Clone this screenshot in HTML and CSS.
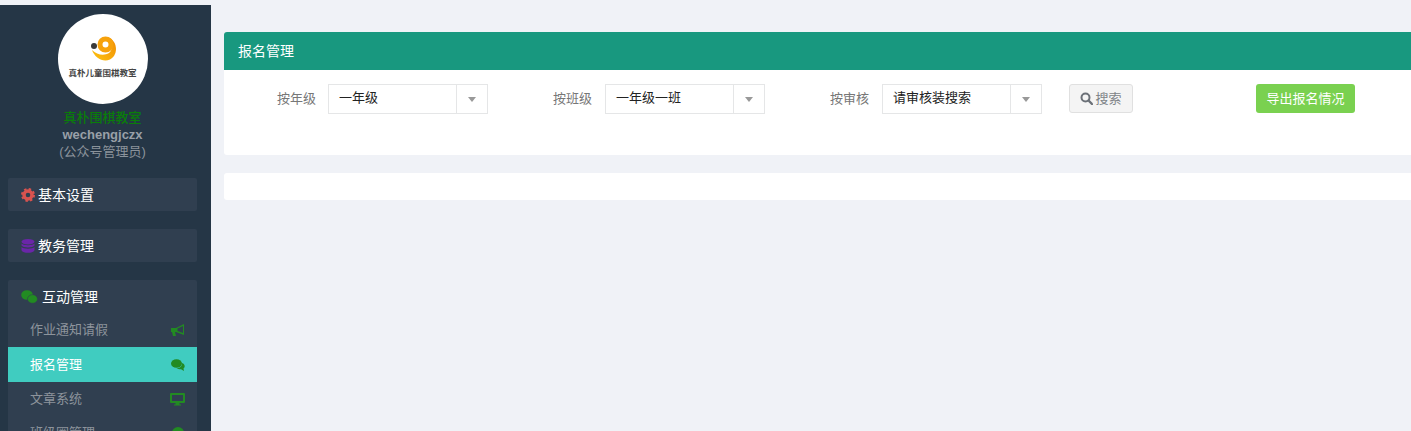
FILE: index.html
```html
<!DOCTYPE html>
<html lang="zh-CN">
<head>
    <meta charset="UTF-8">
    <title>报名管理</title>
    <link rel="stylesheet" href="styles.css">
</head>
<body>
<div class="page">
    <div class="sidebar">
        <div class="profile">
            <div class="avatar">
                <svg class="logo" viewBox="0 0 32 28" width="32" height="28">
                    <defs>
                        <linearGradient id="smile" x1="0" y1="1" x2="1" y2="0">
                            <stop offset="0" stop-color="#fdc30f"/>
                            <stop offset="1" stop-color="#f08a05"/>
                        </linearGradient>
                    </defs>
                    <circle cx="7" cy="11" r="3" fill="#3a3a3a"/>
                    <path d="M5 15 C8 24 20 30 27 21 C31 15 29 5 21 2 C26 8 26 15 22 18 C17 21 10 20 5 15 Z" fill="url(#smile)"/>
                    <circle cx="18.500" cy="9.500" r="5.500" fill="none" stroke="#f7a20c" stroke-width="5"/>
                </svg>
                <span class="logo-name">真朴儿童围棋教室</span>
            </div>
            <div class="school">真朴围棋教室</div>
            <div class="account">wechengjczx</div>
            <div class="role">(公众号管理员)</div>
        </div>

        <div class="menu-group">
            <div class="menu-title">
                <svg class="title-icon" viewBox="0 0 14 14" width="14" height="14">
                    <circle cx="7" cy="7" r="4" fill="none" stroke="#d9534f" stroke-width="3.400"/>
                    <circle cx="7" cy="7" r="6" fill="none" stroke="#d9534f" stroke-width="2" stroke-dasharray="2.400 2.312"/>
                </svg>
                基本设置
            </div>
        </div>

        <div class="menu-group">
            <div class="menu-title">
                <svg class="title-icon" viewBox="0 0 14 14" width="14" height="14">
                    <ellipse cx="7" cy="2.800" rx="6.500" ry="2.800" fill="#6a26a8"/>
                    <path d="M.5 4.500 C2 6.800 12 6.800 13.500 4.500 V6.500 C12 9 2 9 .5 6.500 Z" fill="#6a26a8"/>
                    <path d="M.5 8 C2 10.300 12 10.300 13.500 8 V11.200 C12 14.700 2 14.700 .5 11.200 Z" fill="#6a26a8"/>
                </svg>
                教务管理
            </div>
        </div>

        <div class="menu-group">
            <div class="menu-title menu-title-wide">
                <svg class="title-icon" viewBox="0 0 17 14" width="17" height="14">
                    <ellipse cx="6" cy="5" rx="5.800" ry="4.800" fill="#228b22"/>
                    <ellipse cx="11.500" cy="9" rx="5" ry="4.300" stroke="#303f50" stroke-width=".6" fill="#228b22"/>
                </svg>
                互动管理
            </div>
            <div class="menu-item">
                作业通知请假
                <svg viewBox="0 0 14 12" width="14" height="12">
                    <path d="M0 4 H5 L13 0 V11 L5 8 H4 L5 12 H2 L1 8 H0 Z" fill="#228b22"/>
                    <path d="M6.500 4.500 L12 2 V9 L6.500 7 Z" fill="#303f50"/>
                </svg>
            </div>
            <div class="menu-item menu-item-active">
                报名管理
                <svg viewBox="0 0 14 12" width="14" height="12">
                    <ellipse cx="5.500" cy="4.500" rx="5.500" ry="4.300" fill="#228b22"/>
                    <path d="M11 4 C14 5 14.500 8 12.500 9.500 L13 12 L10 10.300 C8 10.300 6.500 10 5.500 9.300 C9 9.300 11.500 7 11 4 Z" fill="#228b22"/>
                </svg>
            </div>
            <div class="menu-item">
                文章系统
                <svg viewBox="0 0 15 13" width="15" height="13">
                    <path d="M1 0 H14 A1 1 0 0 1 15 1 V9 A1 1 0 0 1 14 10 H9.500 V11.500 H11 V12.500 H4 V11.500 H5.500 V10 H1 A1 1 0 0 1 0 9 V1 A1 1 0 0 1 1 0 Z M2 2 V8 H13 V2 Z" fill="#228b22"/>
                </svg>
            </div>
            <div class="menu-item">
                班级圈管理
                <svg viewBox="0 0 14 14" width="14" height="14">
                    <circle cx="7" cy="7" r="6" fill="#228b22"/>
                </svg>
            </div>
        </div>
    </div>

    <div class="main">
        <div class="panel">
            <div class="panel-head">报名管理</div>
            <div class="filters">
                <label class="filter-label">按年级</label>
                <div class="select">
                    <span class="select-text">一年级</span>
                    <span class="select-arrow"></span>
                </div>
                <label class="filter-label">按班级</label>
                <div class="select">
                    <span class="select-text">一年级一班</span>
                    <span class="select-arrow"></span>
                </div>
                <label class="filter-label">按审核</label>
                <div class="select">
                    <span class="select-text">请审核装搜索</span>
                    <span class="select-arrow"></span>
                </div>
                <a class="btn btn-search">
                    <svg viewBox="0 0 13 13" width="13" height="13">
                        <circle cx="5.500" cy="5.500" r="4" fill="none" stroke="#6b7077" stroke-width="2"/>
                        <path d="M8.500 8.500 L12 12" stroke="#6b7077" stroke-width="2.400" stroke-linecap="round"/>
                    </svg>
                    搜索
                </a>
                <a class="btn btn-export">导出报名情况</a>
            </div>
        </div>
        <div class="panel panel-empty"></div>
    </div>
</div>
</body>
</html>
```

FILE: styles.css
```css
html, body { margin: 0; padding: 0; }
body {
    height: 431px;
    overflow: hidden;
    background: #f0f2f7;
    font: 13px/1.5 "Liberation Sans", "Noto Sans CJK SC", sans-serif;
}

.page {
    display: flex;
    height: 431px;
    overflow: hidden;
}

/* sidebar */
.sidebar {
    flex: none;
    width: 211px;
    margin-top: 5px;
    padding: 9px 14px 0 8px;
    box-sizing: border-box;
    background: #253646;
    overflow: hidden;
}
.profile {
    display: flex;
    flex-direction: column;
    align-items: center;
    margin-bottom: 18px;
}
.avatar {
    display: flex;
    flex-direction: column;
    align-items: center;
    width: 90px;
    height: 90px;
    border-radius: 50%;
    background: #fff;
    box-sizing: border-box;
    padding-top: 21px;
}
.logo-name {
    margin-top: 4px;
    font-size: 8.500px;
    line-height: 12px;
    font-weight: 700;
    color: #444;
    white-space: nowrap;
}
.school {
    margin-top: 5px;
    font-size: 13px;
    font-weight: 500;
    line-height: 17px;
    color: #0a7d0a;
}
.account {
    font-size: 13px;
    font-weight: 700;
    line-height: 17px;
    color: #99a0a8;
}
.role {
    font-size: 13px;
    line-height: 17px;
    color: #8b939b;
}

.menu-group {
    margin-bottom: 18px;
    background: #303f50;
    border-radius: 2px;
}
.menu-title {
    display: flex;
    align-items: center;
    gap: 3px;
    height: 33px;
    box-sizing: border-box;
    padding: 1px 0 0 13px;
    font-size: 14px;
    color: #fff;
}
.menu-title-wide { gap: 4px; }
.menu-item {
    display: flex;
    align-items: center;
    justify-content: space-between;
    height: 34px;
    padding: 0 12px 0 22px;
    font-size: 13px;
    color: #8d949c;
}
.menu-item-active {
    height: 35px;
    background: #40ccc0;
    color: #fff;
}

/* main */
.main {
    flex: 1;
    min-width: 0;
    overflow: hidden;
    padding: 32px 0 0 13px;
}
.panel {
    margin-right: -10px;
    margin-bottom: 18px;
    background: #fff;
    border-radius: 3px;
    height: 123px;
}
.panel-head {
    height: 38px;
    padding-left: 14px;
    background: #18987f;
    border-radius: 3px 3px 0 0;
    font-size: 14px;
    line-height: 38px;
    color: #fff;
}
.panel-empty { height: 27px; }

.filters {
    display: flex;
    align-items: flex-start;
    padding: 14px 0 0 52px;
}
.filter-label {
    width: 39px;
    margin-right: 13px;
    font-size: 13px;
    line-height: 30px;
    color: #777;
    white-space: nowrap;
}
.filter-label:first-child {
    margin-left: 1px;
    margin-right: 12px;
}
.select {
    display: flex;
    width: 160px;
    height: 30px;
    margin-right: 65px;
    box-sizing: border-box;
    border: 1px solid #e5e6e7;
}
.select:nth-of-type(3) { margin-right: 27px; }
.select-text {
    flex: 1;
    padding-left: 10px;
    font-size: 13px;
    line-height: 26px;
    color: #222;
}
.select-arrow {
    position: relative;
    flex: none;
    width: 30px;
    border-left: 1px solid #e5e6e7;
}
.select-arrow::after {
    content: "";
    position: absolute;
    left: 11px;
    top: 12px;
    border: 4px solid transparent;
    border-top: 5px solid #999;
    border-bottom: 0;
}

.btn {
    display: flex;
    align-items: center;
    justify-content: center;
    height: 29px;
    box-sizing: border-box;
    border-radius: 3px;
    font-size: 13px;
    white-space: nowrap;
}
.btn-search {
    gap: 2px;
    width: 64px;
    margin-right: 123px;
    border: 1px solid #e0e0e0;
    background: #f4f4f4;
    color: #808488;
}
.btn-export {
    width: 99px;
    background: #7ad150;
    color: #fff;
}
```
